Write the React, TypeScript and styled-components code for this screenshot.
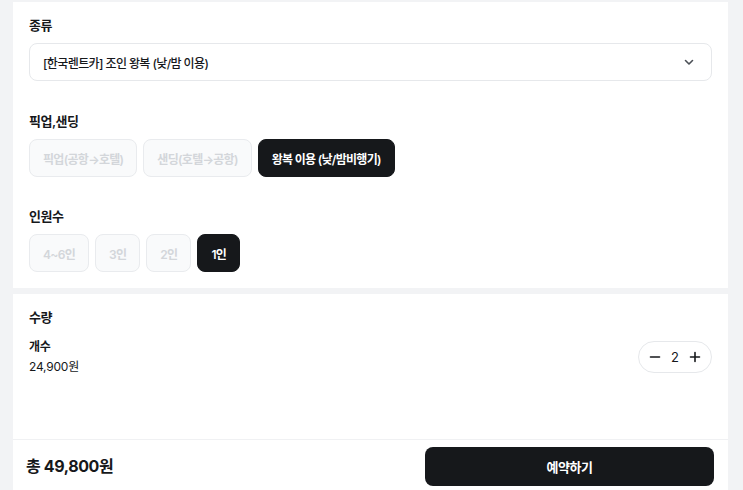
import React from 'react';
import styled, { createGlobalStyle } from 'styled-components';

const GlobalStyle = createGlobalStyle`
  html, body {
    margin: 0;
    padding: 0;
    background: #f2f3f5;
    font-family: Inter, "Noto Sans CJK KR", sans-serif;
    color: #16181b;
  }
`;

const Page = styled.div`
  width: 715px;
  margin-left: 13px;
  height: 490px;
  display: flex;
  flex-direction: column;
`;

const Card = styled.section<{ $top: number; $height?: number }>`
  background: #fff;
  margin-top: ${(p) => p.$top}px;
  padding: 13px 16px 16px;
  box-sizing: border-box;
  ${(p) => (p.$height ? `height: ${p.$height}px;` : '')}
`;

const Label = styled.div<{ $gap?: number }>`
  font-size: 13px;
  font-weight: 600;
  line-height: 20px;
  letter-spacing: -0.5px;
  margin-top: ${(p) => p.$gap ?? 0}px;
`;

const Select = styled.div`
  margin-top: 8px;
  height: 38px;
  box-sizing: border-box;
  border: 1px solid #e6e8eb;
  border-radius: 8px;
  padding: 0 16px 0 13px;
  display: flex;
  align-items: center;
  justify-content: space-between;
  font-size: 12px;
  font-weight: 500;
  letter-spacing: -0.6px;
`;

const ChipRow = styled.div`
  margin-top: 8px;
  display: flex;
  gap: 6px;
`;

const Chip = styled.div<{ $active?: boolean }>`
  height: 38px;
  box-sizing: border-box;
  padding: 0 13px;
  display: flex;
  align-items: center;
  border-radius: 8px;
  font-size: 12px;
  font-weight: 600;
  letter-spacing: -0.7px;
  border: 1px solid ${(p) => (p.$active ? '#16181b' : '#e9ebee')};
  background: ${(p) => (p.$active ? '#16181b' : '#f9fafb')};
  color: ${(p) => (p.$active ? '#fff' : '#d3d6da')};
`;

const QtyRow = styled.div`
  margin-top: 10px;
  display: flex;
  align-items: center;
  justify-content: space-between;
`;

const QtyInfo = styled.div`
  font-size: 12px;
  line-height: 20px;
  letter-spacing: -0.2px;
`;

const QtyName = styled.div`
  font-weight: 600;
`;

const Stepper = styled.div`
  width: 74px;
  height: 32px;
  box-sizing: border-box;
  border: 1px solid #e6e8eb;
  border-radius: 999px;
  display: flex;
  align-items: center;
  justify-content: space-between;
  padding: 0 10px;
  font-size: 13px;
`;

const Footer = styled.footer`
  flex: 1;
  background: #fff;
  border-top: 1px solid #f0f1f3;
  display: flex;
  align-items: flex-start;
  justify-content: space-between;
  padding: 7px 14px 0 13px;
`;

const Total = styled.div`
  font-size: 16px;
  font-weight: 700;
  line-height: 38px;
  letter-spacing: -0.4px;
`;

const BookButton = styled.button`
  width: 289px;
  height: 39px;
  border: none;
  border-radius: 8px;
  background: #16181b;
  color: #fff;
  font-family: inherit;
  font-size: 13px;
  font-weight: 700;
  letter-spacing: -0.5px;
`;

const Chevron = () => (
  <svg width="12" height="12" viewBox="0 0 12 12" fill="none">
    <path d="M2.5 4.5L6 8l3.5-3.5" stroke="#4b5056" strokeWidth="1.6" strokeLinecap="round" strokeLinejoin="round" />
  </svg>
);

const Minus = () => (
  <svg width="12" height="12" viewBox="0 0 12 12">
    <path d="M1.5 6h9" stroke="#16181b" strokeWidth="1.6" strokeLinecap="round" />
  </svg>
);

const Plus = () => (
  <svg width="12" height="12" viewBox="0 0 12 12">
    <path d="M1.5 6h9M6 1.5v9" stroke="#16181b" strokeWidth="1.6" strokeLinecap="round" />
  </svg>
);

const trips = ['픽업(공항→호텔)', '샌딩(호텔→공항)', '왕복 이용 (낮/밤비행기)'];
const people = ['4~6인', '3인', '2인', '1인'];

export default function App() {
  return (
    <Page>
      <GlobalStyle />
      <Card $top={2}>
        <Label>종류</Label>
        <Select>
          <span>[한국렌트카] 조인 왕복 (낮/밤 이용)</span>
          <Chevron />
        </Select>

        <Label $gap={30}>픽업,샌딩</Label>
        <ChipRow>
          {trips.map((t, i) => (
            <Chip key={t} $active={i === trips.length - 1}>{t}</Chip>
          ))}
        </ChipRow>

        <Label $gap={29}>인원수</Label>
        <ChipRow>
          {people.map((p, i) => (
            <Chip key={p} $active={i === people.length - 1}>{p}</Chip>
          ))}
        </ChipRow>
      </Card>

      <Card $top={6} $height={145}>
        <Label>수량</Label>
        <QtyRow>
          <QtyInfo>
            <QtyName>개수</QtyName>
            <div>24,900원</div>
          </QtyInfo>
          <Stepper>
            <Minus />
            <span>2</span>
            <Plus />
          </Stepper>
        </QtyRow>
      </Card>

      <Footer>
        <Total>총 49,800원</Total>
        <BookButton>예약하기</BookButton>
      </Footer>
    </Page>
  );
}
